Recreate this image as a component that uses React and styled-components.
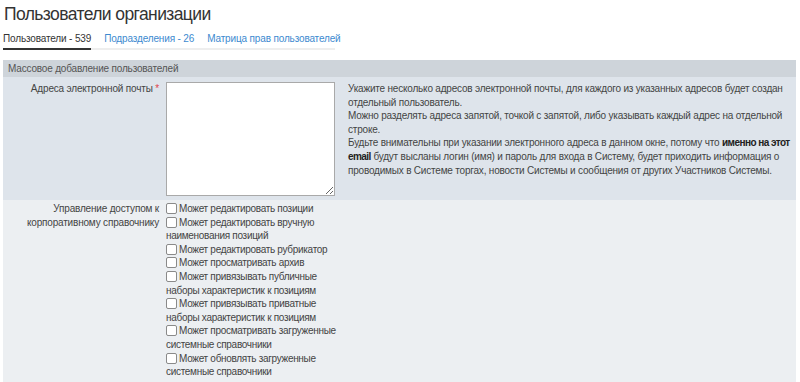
import styled, { createGlobalStyle } from 'styled-components';

const GlobalStyle = createGlobalStyle`
  body {
    margin: 0;
    background: #fff;
    font-family: "Liberation Sans", Arial, sans-serif;
    color: #333;
  }
`

const Page = styled.div`
  padding: 0 4px 0 3px;
`
const Title = styled.h1`
  margin: 0;
  padding: 2px 0 0 1px;
  font-size: 17.5px;
  letter-spacing: -0.6px;
  font-weight: 400;
  line-height: 24px;
  color: #333;
`
const Tabs = styled.div`
  display: flex;
  gap: 13px;
  width: 332px;
  margin-top: 6px;
  border-bottom: 2px solid #eee;
`
const Tab = styled.span`
  flex-shrink: 0;
  white-space: nowrap;
  font-size: 10px;
  letter-spacing: -0.15px;
  line-height: 13px;
  padding-bottom: 3px;
  margin-bottom: -2px;
  color: ${props => props.active ? "#333" : "#3d8ad0"};
  border-bottom: 2px solid ${props => props.active ? "#333" : "transparent"};
  cursor: pointer;
`
const Panel = styled.div`
  margin-top: 10px;
  width: 793px;
  font-size: 10px;
  letter-spacing: -0.18px;
  color: #444;
`
const PanelHeader = styled.div`
  background: #ced4da;
  height: 17px;
  line-height: 17px;
  padding-left: 5px;
  color: #555;
`
const Row = styled.div`
  display: grid;
  grid-template-columns: 159px 169px 1fr;
  column-gap: 4px;
  background: ${props => props.shade === "dark" ? "#dee4eb" : "#eceff2"};
  padding: ${props => props.shade === "dark" ? "5px 0 4px" : "2px 0 3px"};
`
const Label = styled.div`
  text-align: right;
  line-height: 13.6px;
  padding-right: 3px;
  color: #444;
`
const Required = styled.span`
  color: #e0454e;
`
const TextArea = styled.textarea`
  box-sizing: border-box;
  width: 169px;
  height: 114px;
  border: 1px solid #a9a9a9;
  background: #fff;
  margin: 0;
  resize: vertical;
`
const Help = styled.div`
  padding: 0 0 0 9px;
  line-height: 13.6px;
  letter-spacing: -0.2px;
  color: #444;
  b {
    color: #222;
    letter-spacing: -0.55px;
  }
`
const Checks = styled.div`
  line-height: 13.6px;
  letter-spacing: -0.3px;
  margin-right: -8px;
`
const CheckItem = styled.label`
  display: block;
  color: #444;
`
const Box = styled.input`
  appearance: none;
  box-sizing: border-box;
  width: 11px;
  height: 11px;
  border: 1px solid #8a8a8a;
  border-radius: 2px;
  background: #fff;
  margin: 0 2px 0 0;
  vertical-align: -2px;
`

const permissions = [
  "Может редактировать позиции",
  "Может редактировать вручную наименования позиций",
  "Может редактировать рубрикатор",
  "Может просматривать архив",
  "Может привязывать публичные наборы характеристик к позициям",
  "Может привязывать приватные наборы характеристик к позициям",
  "Может просматривать загруженные системные справочники",
  "Может обновлять загруженные системные справочники",
]

const App = () => {
  return (
    <Page>
      <GlobalStyle />
      <Title>Пользователи организации</Title>
      <Tabs>
        <Tab active>Пользователи - 539</Tab>
        <Tab>Подразделения - 26</Tab>
        <Tab>Матрица прав пользователей</Tab>
      </Tabs>
      <Panel>
        <PanelHeader>Массовое добавление пользователей</PanelHeader>
        <Row shade="dark">
          <Label>Адреса электронной почты <Required>*</Required></Label>
          <TextArea />
          <Help>
            Укажите несколько адресов электронной почты, для каждого из указанных адресов будет создан отдельный пользователь.<br />
            Можно разделять адреса запятой, точкой с запятой, либо указывать каждый адрес на отдельной строке.<br />
            Будьте внимательны при указании электронного адреса в данном окне, потому что <b>именно на этот email</b> будут высланы логин (имя) и пароль для входа в Систему, будет приходить информация о проводимых в Системе торгах, новости Системы и сообщения от других Участников Системы.
          </Help>
        </Row>
        <Row>
          <Label>Управление доступом к корпоративному справочнику</Label>
          <Checks>
            {permissions.map(p => (
              <CheckItem key={p}>
                <Box type="checkbox" />{p}
              </CheckItem>
            ))}
          </Checks>
        </Row>
      </Panel>
    </Page>
  )
}

export default App
